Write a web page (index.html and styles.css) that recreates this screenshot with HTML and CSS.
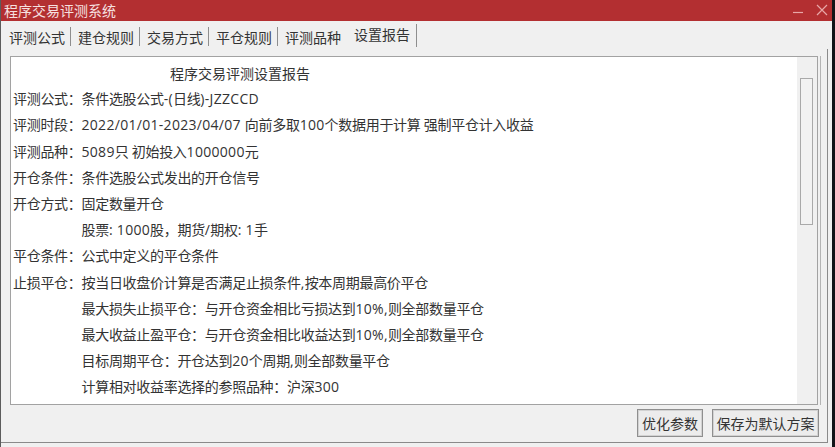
FILE: index.html
```html
<!DOCTYPE html>
<html lang="zh-CN">
<head>
<meta charset="utf-8">
<title>程序交易评测系统</title>
<link rel="stylesheet" href="styles.css">
</head>
<body>
<div class="window">
  <div class="titlebar">
    <span class="title">程序交易评测系统</span>
    <div class="controls">
      <svg class="ctl-min" width="12" height="12" viewBox="0 0 12 12"><line x1="1" y1="7.5" x2="11" y2="7.5" stroke="#e8a7a7" stroke-width="1.2"/></svg>
      <svg class="ctl-close" width="12" height="12" viewBox="0 0 12 12"><path d="M1 1 L11 11 M11 1 L1 11" stroke="#e8a7a7" stroke-width="1.2" fill="none"/></svg>
    </div>
  </div>
  <div class="tabs">
    <div class="tab">评测公式</div>
    <div class="tab">建仓规则</div>
    <div class="tab">交易方式</div>
    <div class="tab">平仓规则</div>
    <div class="tab before-active">评测品种</div>
    <div class="tab active">设置报告</div>
  </div>
  <div class="page">
    <div class="report">
      <div class="report-text">
        <div class="line heading">程序交易评测设置报告</div>
        <div class="line">评测公式：条件选股公式<span class="lat">-(</span>日线<span class="lat">)-JZZCCD</span></div>
        <div class="line">评测时段：<span class="lat">2022/01/01-2023/04/07 </span>向前多取<span class="lat">100</span>个数据用于计算 强制平仓计入收益</div>
        <div class="line">评测品种：<span class="lat">5089</span>只 初始投入<span class="lat">1000000</span>元</div>
        <div class="line">开仓条件：条件选股公式发出的开仓信号</div>
        <div class="line">开仓方式：固定数量开仓</div>
        <div class="line indent">股票<span class="lat">: 1000</span>股，期货<span class="lat">/</span>期权<span class="lat">: 1</span>手</div>
        <div class="line">平仓条件：公式中定义的平仓条件</div>
        <div class="line">止损平仓：按当日收盘价计算是否满足止损条件<span class="lat">,</span>按本周期最高价平仓</div>
        <div class="line indent">最大损失止损平仓：与开仓资金相比亏损达到<span class="lat">10%,</span>则全部数量平仓</div>
        <div class="line indent">最大收益止盈平仓：与开仓资金相比收益达到<span class="lat">10%,</span>则全部数量平仓</div>
        <div class="line indent">目标周期平仓：开仓达到<span class="lat">20</span>个周期<span class="lat">,</span>则全部数量平仓</div>
        <div class="line indent">计算相对收益率选择的参照品种：沪深<span class="lat">300</span></div>
      </div>
      <div class="scrollbar">
        <div class="thumb"></div>
      </div>
    </div>
    <div class="buttons">
      <button class="btn btn-opt">优化参数</button>
      <button class="btn btn-save">保存为默认方案</button>
    </div>
  </div>
</div>
</body>
</html>
```

FILE: styles.css
```css
* { box-sizing: border-box; }

html, body {
  margin: 0;
  padding: 0;
}

body {
  width: 835px;
  height: 447px;
  overflow: hidden;
  background: #121418;
  font-family: "Open Sans", "Noto Sans CJK SC", sans-serif;
  font-size: 14px;
  color: #333333;
}

.window {
  width: 832px;
  height: 447px;
  background: #f0f0f0;
  border-left: 1px solid #5c5c5c;
  display: flex;
  flex-direction: column;
}

.titlebar {
  height: 21px;
  flex: 0 0 21px;
  background: #b32f31;
  display: flex;
  align-items: center;
  justify-content: space-between;
  padding-left: 3px;
}

.title {
  color: #f6e0e0;
  font-family: "Noto Sans CJK SC", sans-serif;
  font-size: 14px;
  line-height: 21px;
}

.controls {
  display: flex;
  align-items: center;
  gap: 12px;
  padding-right: 4px;
}

.ctl-close { margin-top: -2px; }

.tabs {
  height: 28px;
  flex: 0 0 28px;
  display: flex;
  align-items: flex-start;
  padding-left: 1px;
  padding-top: 6px;
}

.tab {
  height: 19px;
  line-height: 21px;
  padding: 0 5px 0 7px;
  border-right: 1px solid #8e8e8e;
  font-family: "Noto Sans CJK SC", sans-serif;
  font-size: 14px;
  color: #333;
  white-space: nowrap;
}

.tab.before-active {
  border-right-color: transparent;
}

.tab.active {
  margin-top: -3px;
  height: 23px;
  line-height: 21px;
  padding: 0 6px 0 7px;
  border-right: 1px solid #8e8e8e;
}

.page {
  width: 827px;
  height: 394px;
  border-right: 1px solid #8a8a8a;
  border-bottom: 1px solid #8a8a8a;
  padding: 7px 8px 0 9px;
  display: flex;
  flex-direction: column;
}

.report {
  width: 808px;
  height: 349px;
  background: #ffffff;
  border: 1px solid #a2a2a2;
  box-shadow: 2px 0 0 #f0f0f0, 3px 0 0 #b4b4b4;
  display: flex;
}

.report-text {
  flex: 1;
  padding: 3px 0 0 2px;
  overflow: hidden;
}

.line {
  line-height: 26.2px;
  white-space: nowrap;
  letter-spacing: -0.3px;
  color: #333;
}

.lat {
  font-family: "Open Sans", sans-serif;
  font-size: 14px;
  letter-spacing: 0.3px;
}

.line.heading {
  padding-left: 157px;
  letter-spacing: 0;
  font-family: "Noto Sans CJK SC", sans-serif;
}

.line.indent {
  padding-left: 68.5px;
}

.scrollbar {
  width: 20px;
  flex: 0 0 20px;
  background: #f0f0f0;
  padding: 21px 0 0 3px;
}

.thumb {
  width: 13px;
  height: 147px;
  border: 1px solid #a9a9a9;
  background: #f2f2f2;
}

.buttons {
  display: flex;
  justify-content: flex-end;
  gap: 9px;
  margin-top: 4px;
  width: 809px;
}

.btn {
  height: 28px;
  padding: 0;
  font-family: "Noto Sans CJK SC", sans-serif;
  font-size: 14px;
  color: #333;
  background: #ececec;
  border: 1px solid #8f8f8f;
  box-shadow: inset 0 0 0 1px #d2d2d2;
  line-height: 24px;
}

.btn-opt { width: 66px; }
.btn-save { width: 107px; }
```
